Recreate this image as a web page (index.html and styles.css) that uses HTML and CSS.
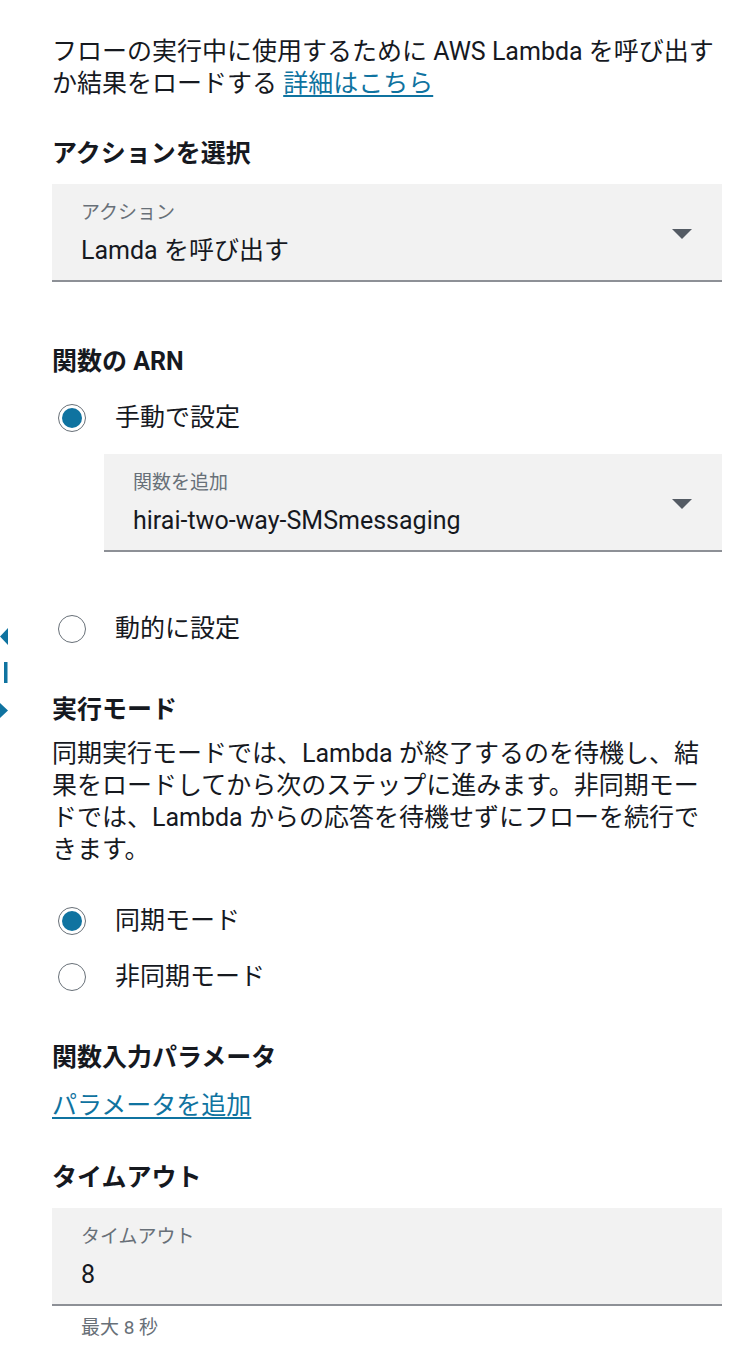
FILE: index.html
```html
<!DOCTYPE html>
<html lang="ja">
<head>
  <meta charset="UTF-8">
  <meta name="viewport" content="width=device-width, initial-scale=1.0">
  <title>Lambda 関数を呼び出す</title>
  <link rel="stylesheet" href="styles.css">
</head>
<body>
  <div class="panel">
    <svg class="resize-handle" width="8" height="92" viewBox="0 0 8 92" aria-hidden="true">
      <path d="M8 0 L8 17 L0 8.5 Z" fill="#0f73a0"/>
      <rect x="4" y="34" width="3.5" height="21" fill="#0f73a0"/>
      <path d="M0 75 L8 82.5 L0 90 Z" fill="#0f73a0"/>
    </svg>

    <p class="desc">フローの実行中に使用するために AWS Lambda を呼び出す<br>か結果をロードする <a href="#">詳細はこちら</a></p>

    <h2 class="section-title first">アクションを選択</h2>
    <div class="select-field">
      <div class="field-text">
        <div class="field-label">アクション</div>
        <div class="field-value">Lamda を呼び出す</div>
      </div>
      <span class="caret"></span>
    </div>

    <h2 class="section-title arn-title">関数の ARN</h2>
    <label class="radio-row arn-manual">
      <span class="radio checked"></span>
      <span>手動で設定</span>
    </label>
    <div class="select-field nested">
      <div class="field-text">
        <div class="field-label">関数を追加</div>
        <div class="field-value">hirai-two-way-SMSmessaging</div>
      </div>
      <span class="caret"></span>
    </div>
    <label class="radio-row arn-dynamic">
      <span class="radio"></span>
      <span>動的に設定</span>
    </label>

    <h2 class="section-title mode-title">実行モード</h2>
    <p class="mode-desc">同期実行モードでは、Lambda が終了するのを待機し、結<br>果をロードしてから次のステップに進みます。非同期モー<br>ドでは、Lambda からの応答を待機せずにフローを続行で<br>きます。</p>
    <label class="radio-row mode-sync">
      <span class="radio checked"></span>
      <span>同期モード</span>
    </label>
    <label class="radio-row mode-async">
      <span class="radio"></span>
      <span>非同期モード</span>
    </label>

    <h2 class="section-title params-title">関数入力パラメータ</h2>
    <a href="#" class="add-link">パラメータを追加</a>

    <h2 class="section-title timeout-title">タイムアウト</h2>
    <div class="select-field input-field">
      <div class="field-text">
        <div class="field-label">タイムアウト</div>
        <div class="field-value">8</div>
      </div>
    </div>
    <div class="hint">最大 8 秒</div>
  </div>
</body>
</html>
```

FILE: styles.css
```css
:root {
  --text-color: #16191f;
  --muted: #687078;
  --link: #0f73a0;
  --field-bg: #f2f2f2;
  --field-line: #8d9096;
  --caret: #545b64;
}

* {
  box-sizing: border-box;
  margin: 0;
  padding: 0;
}

body {
  font-family: Roboto, "Noto Sans CJK JP", sans-serif;
  font-size: 25px;
  line-height: 32px;
  color: var(--text-color);
  background: #fff;
}

.panel {
  position: relative;
  display: flex;
  flex-direction: column;
  padding: 36px 20px 28px 52px;
}

.resize-handle {
  position: absolute;
  left: 0;
  top: 628px;
}

a {
  color: var(--link);
  text-decoration: underline;
  text-decoration-thickness: 2px;
  text-underline-offset: 3px;
}

.section-title {
  font-size: 25px;
  font-weight: 700;
  line-height: 32px;
}

.section-title.first { margin-top: 38px; }
.arn-title { margin-top: 64px; }
.mode-title { margin-top: 49px; }
.params-title { margin-top: 49px; }
.timeout-title { margin-top: 40px; }

.select-field {
  display: flex;
  align-items: center;
  justify-content: space-between;
  margin-top: 14px;
  padding: 17px 30px 13px 29px;
  background: var(--field-bg);
  border-bottom: 2px solid var(--field-line);
}

.select-field.nested {
  margin-top: 20px;
  margin-left: 52px;
}

.field-text {
  display: flex;
  flex-direction: column;
  gap: 10px;
}

.field-label {
  font-size: 19px;
  line-height: 24px;
  color: var(--muted);
}

.field-value {
  font-size: 25px;
  line-height: 32px;
}

.caret {
  width: 0;
  height: 0;
  border-left: 10px solid transparent;
  border-right: 10px solid transparent;
  border-top: 10px solid var(--caret);
}

.radio-row {
  display: flex;
  align-items: center;
  gap: 29px;
  padding-left: 6px;
  height: 32px;
}

.arn-manual { margin-top: 24px; }
.arn-dynamic { margin-top: 61px; }
.mode-sync { margin-top: 39px; }
.mode-async { margin-top: 24px; }

.radio {
  position: relative;
  width: 28px;
  height: 28px;
  border: 1.5px solid var(--muted);
  border-radius: 50%;
  background: #fff;
}

.radio.checked::after {
  content: "";
  position: absolute;
  top: 2.5px;
  left: 2.5px;
  width: 20px;
  height: 20px;
  border-radius: 50%;
  background: var(--link);
}

.mode-desc {
  margin-top: 12px;
}

.add-link {
  margin-top: 16px;
  align-self: flex-start;
}

.hint {
  margin-top: 10px;
  padding-left: 29px;
  font-size: 19px;
  line-height: 24px;
  color: var(--muted);
}
```
